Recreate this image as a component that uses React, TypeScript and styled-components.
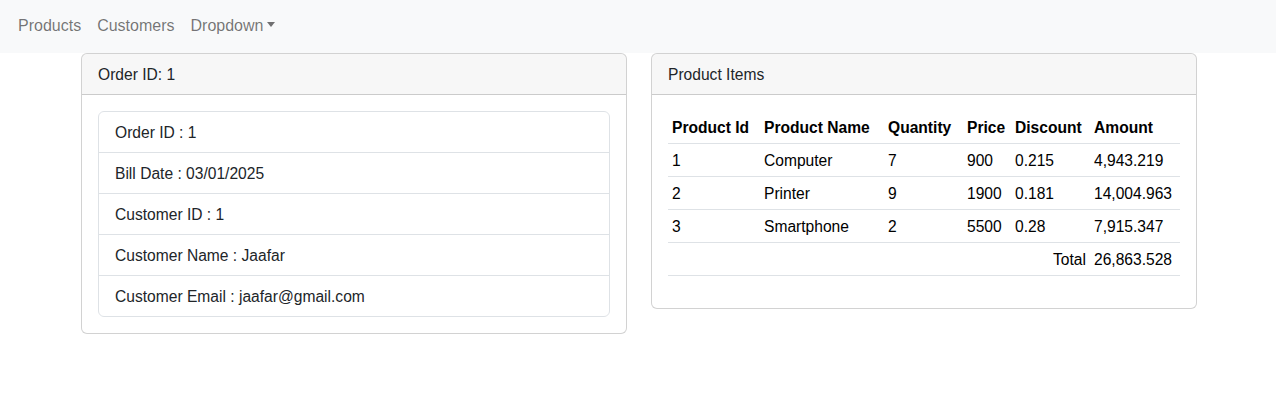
import React from "react";
import styled, { createGlobalStyle } from "styled-components";

const Global = createGlobalStyle`
  * { box-sizing: border-box; }
  body {
    margin: 0;
    background: #fff;
    color: #212529;
    font-family: "Liberation Sans", Arial, sans-serif;
    font-size: 16px;
    line-height: 24px;
  }
`;

const Navbar = styled.nav`
  height: 53px;
  background: #f8f9fa;
  display: flex;
  align-items: center;
  padding: 0 10px 2px;
`;

const NavLink = styled.a`
  color: rgba(0, 0, 0, 0.55);
  padding: 0 8px;
  text-decoration: none;
  display: inline-flex;
  align-items: center;
`;

const Caret = styled.span`
  display: inline-block;
  margin-left: 4px;
  width: 0;
  height: 0;
  border-top: 5px solid rgba(0, 0, 0, 0.55);
  border-left: 4.5px solid transparent;
  border-right: 4.5px solid transparent;
  margin-top: -2px;
`;

const Container = styled.div`
  width: 1116px;
  margin-left: 81px;
  display: grid;
  grid-template-columns: 546px 546px;
  column-gap: 24px;
  align-items: start;
  font-size: 15.6px;
`;

const Card = styled.div`
  border: 1px solid rgba(0, 0, 0, 0.175);
  border-radius: 6px;
  background: #fff;
  overflow: hidden;
`;

const CardHeader = styled.div`
  padding: 9px 16px 7px;
  background: rgba(0, 0, 0, 0.03);
  border-bottom: 1px solid rgba(0, 0, 0, 0.175);
`;

const CardBody = styled.div`
  padding: 16px;
`;

const List = styled.ul`
  list-style: none;
  margin: 0;
  padding: 0;
  border: 1px solid #dee2e6;
  border-radius: 6px;
`;

const ListItem = styled.li`
  padding: 9px 16px 7px;
  border-top: 1px solid #dee2e6;
  &:first-child { border-top: none; }
`;

const Table = styled.table`
  width: 100%;
  border-collapse: collapse;
  margin-bottom: 16px;
  color: #000;
  font-size: 15.6px;
`;

const Th = styled.th<{ $w: number }>`
  width: ${(p) => p.$w}px;
  text-align: left;
  padding: 5px 4px 3px;
  font-weight: 700;
  border-bottom: 1px solid #dee2e6;
  white-space: nowrap;
`;

const Td = styled.td<{ $right?: boolean }>`
  padding: 5px 4px 3px;
  border-bottom: 1px solid #dee2e6;
  text-align: ${(p) => (p.$right ? "right" : "left")};
  white-space: nowrap;
`;

const cols: [string, number][] = [
  ["Product Id", 92],
  ["Product Name", 124],
  ["Quantity", 79],
  ["Price", 48],
  ["Discount", 79],
  ["Amount", 90],
];

const rows = [
  ["1", "Computer", "7", "900", "0.215", "4,943.219"],
  ["2", "Printer", "9", "1900", "0.181", "14,004.963"],
  ["3", "Smartphone", "2", "5500", "0.28", "7,915.347"],
];

const info = [
  "Order ID : 1",
  "Bill Date : 03/01/2025",
  "Customer ID : 1",
  "Customer Name : Jaafar",
  "Customer Email : jaafar@gmail.com",
];

export default function App() {
  return (
    <>
      <Global />
      <Navbar>
        <NavLink>Products</NavLink>
        <NavLink>Customers</NavLink>
        <NavLink>
          Dropdown
          <Caret />
        </NavLink>
      </Navbar>
      <Container>
        <Card>
          <CardHeader>Order ID: 1</CardHeader>
          <CardBody>
            <List>
              {info.map((t) => (
                <ListItem key={t}>{t}</ListItem>
              ))}
            </List>
          </CardBody>
        </Card>
        <Card>
          <CardHeader>Product Items</CardHeader>
          <CardBody>
            <Table>
              <thead>
                <tr>
                  {cols.map(([c, w]) => (
                    <Th key={c} $w={w}>
                      {c}
                    </Th>
                  ))}
                </tr>
              </thead>
              <tbody>
                {rows.map((r) => (
                  <tr key={r[0]}>
                    {r.map((c, i) => (
                      <Td key={i}>{c}</Td>
                    ))}
                  </tr>
                ))}
                <tr>
                  <Td colSpan={5} $right>
                    Total
                  </Td>
                  <Td>26,863.528</Td>
                </tr>
              </tbody>
            </Table>
          </CardBody>
        </Card>
      </Container>
    </>
  );
}
